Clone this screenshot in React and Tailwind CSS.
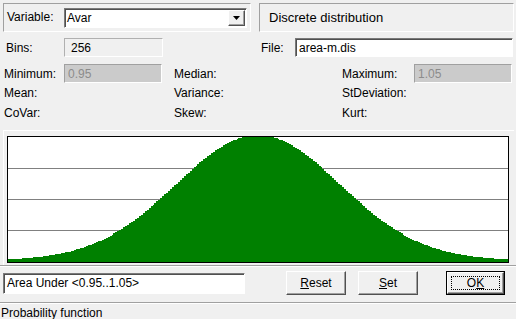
import React from "react";

const sunken =
  "border border-t-[#7a7a7a] border-l-[#7a7a7a] border-b-white border-r-white shadow-[inset_1px_1px_0_#505050]";
const raised =
  "border border-t-white border-l-white border-b-[#505050] border-r-[#505050] shadow-[inset_-1px_-1px_0_#a0a0a0]";

function Chart() {
  const W = 500;
  const H = 125;
  const bins = 256;
  const bw = W / bins;
  let d = `M0,${H}`;
  for (let i = 0; i < bins; i++) {
    const xc = (i + 0.5) * bw - W / 2;
    const h = Math.min(H, Math.round(1.5 + 125.5 * Math.exp(-(xc * xc) / (2 * 82 * 82))));
    const x0 = (i * bw).toFixed(2);
    const x1 = ((i + 1) * bw).toFixed(2);
    d += ` L${x0},${H - h} L${x1},${H - h}`;
  }
  d += ` L${W},${H} Z`;

  return (
    <svg width={W} height={H} className="block" shapeRendering="crispEdges">
      <rect x="0" y="0" width={W} height={H} fill="#ffffff" />
      {[31, 62, 93].map((y) => (
        <line key={y} x1="0" x2={W} y1={y + 0.5} y2={y + 0.5} stroke="#808080" strokeWidth="1" />
      ))}
      <path d={d} fill="#008000" />
    </svg>
  );
}

function Button({ children, focused }) {
  return (
    <div
      className={`relative h-[24px] flex items-center justify-center ${
        focused ? "w-[59px] border border-black" : "w-[60px]"
      }`}
    >
      <div className={`w-full h-full flex items-center justify-center ${raised}`}>{children}</div>
      {focused && <div className="absolute inset-[4px] border border-dotted border-black"></div>}
    </div>
  );
}

function App() {
  return (
    <div className="w-[516px] h-[319px] bg-[#f0f0f0] flex flex-col overflow-hidden text-[12px] text-black font-['Liberation_Sans',Arial,sans-serif] leading-none">
      {/* top group boxes */}
      <div className="mt-[3px] flex h-[29px]">
        <div className="ml-[3px] w-[248px] h-full flex border border-t-[#a0a0a0] border-l-[#a0a0a0] border-b-white border-r-white">
          <div className="w-[60px] pl-[3px] flex items-center">Variable:</div>
          <div className={`mt-[4px] w-[183px] h-[20px] bg-white flex items-center ${sunken}`}>
            <span className="pl-[2px] flex-1">Avar</span>
            <div className={`w-[17px] h-[16px] mr-[1px] flex items-center justify-center bg-[#f0f0f0] ${raised}`}>
              <svg width="7" height="4" viewBox="0 0 7 4">
                <path d="M0 0h7L3.5 4z" fill="#000" />
              </svg>
            </div>
          </div>
        </div>
        <div className="ml-[8px] w-[255px] h-full flex items-center pl-[9px] text-[13px] border border-t-[#a0a0a0] border-l-[#a0a0a0] border-b-white border-r-white">
          Discrete distribution
        </div>
      </div>

      {/* Bins / File */}
      <div className="mt-[6px] flex h-[20px] items-center">
        <div className="w-[64px] pl-[6px]">Bins:</div>
        <div className="w-[99px] h-full flex items-center pl-[6px] border border-t-[#b0b0b0] border-l-[#b0b0b0] border-b-white border-r-white">
          256
        </div>
        <div className="ml-[98px] w-[34px]">File:</div>
        <div className={`w-[218px] h-full bg-white flex items-center pl-[3px] ${sunken}`}>area-m.dis</div>
      </div>

      {/* stats */}
      <div className="mt-[7px] flex h-[19px] items-center">
        <div className="w-[64px] pl-[4px]">Minimum:</div>
        <div className="w-[98px] h-full bg-[#cbcbcb] text-[#8c8c8c] flex items-center pl-[3px] border border-t-[#a0a0a0] border-l-[#a0a0a0] border-b-white border-r-white">
          0.95
        </div>
        <div className="ml-[12px] w-[168px]">Median:</div>
        <div className="w-[72px]">Maximum:</div>
        <div className="w-[98px] h-full bg-[#cbcbcb] text-[#8c8c8c] flex items-center pl-[3px] border border-t-[#a0a0a0] border-l-[#a0a0a0] border-b-white border-r-white">
          1.05
        </div>
      </div>
      <div className="flex h-[20px] items-center">
        <div className="w-[174px] pl-[4px]">Mean:</div>
        <div className="w-[168px]">Variance:</div>
        <div>StDeviation:</div>
      </div>
      <div className="flex h-[20px] items-center">
        <div className="w-[174px] pl-[4px]">CoVar:</div>
        <div className="w-[168px]">Skew:</div>
        <div>Kurt:</div>
      </div>

      {/* chart */}
      <div className="mt-[7px] ml-[3px] w-[511px] h-[137px] pt-[5px] pl-[3px] border-t border-l border-t-white border-l-white">
        <div className="w-[502px] h-[127px] border border-black">
          <Chart />
        </div>
      </div>
      <div className="h-[2px] border-t border-t-[#a0a0a0] border-b border-b-white"></div>

      {/* bottom row */}
      <div className="mt-[4px] flex h-[24px] items-center">
        <div className={`ml-[3px] w-[242px] h-[21px] bg-white flex items-center pl-[3px] ${sunken}`}>
          Area Under &lt;0.95..1.05&gt;
        </div>
        <div className="ml-[41px]">
          <Button>
            <span><span className="underline">R</span>eset</span>
          </Button>
        </div>
        <div className="ml-[12px]">
          <Button>
            <span><span className="underline">S</span>et</span>
          </Button>
        </div>
        <div className="ml-[28px]">
          <Button focused>
            <span>O<span className="underline">K</span></span>
          </Button>
        </div>
      </div>

      {/* status bar */}
      <div className="mt-[7px] h-[2px] border-t border-t-[#a0a0a0] border-b border-b-white"></div>
      <div className="pl-[1px] pt-[3px]">Probability function</div>
    </div>
  );
}

export default App;
